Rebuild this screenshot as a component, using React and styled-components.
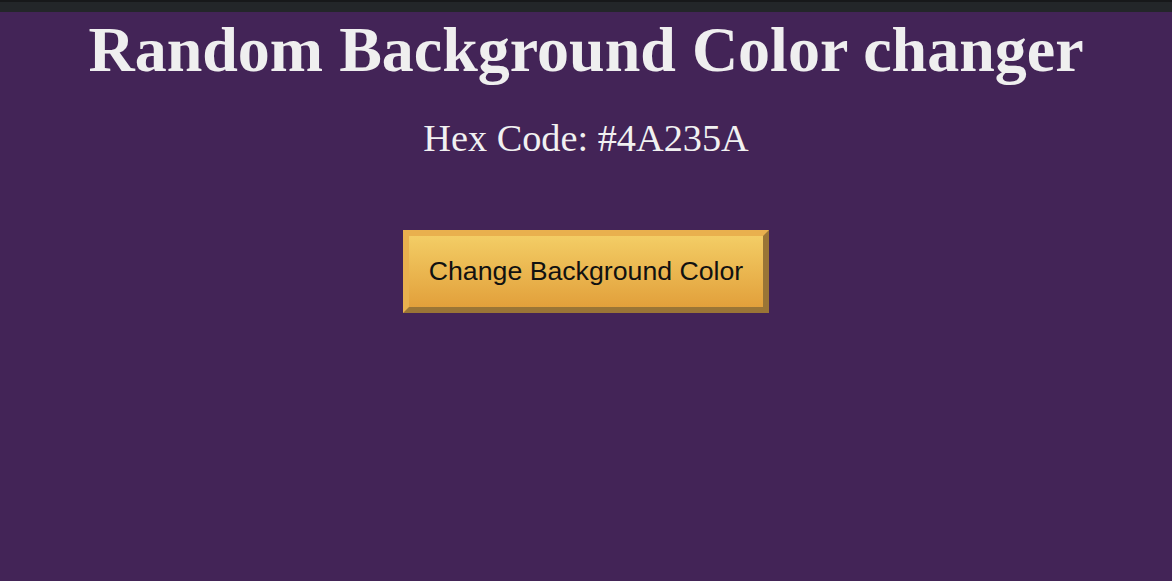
import React, { useState } from "react";
import styled, { createGlobalStyle } from "styled-components";

const GlobalStyle = createGlobalStyle`
  html, body {
    margin: 0;
    padding: 0;
  }
  body {
    background: #432457;
    font-family: "Liberation Serif", "Times New Roman", serif;
  }
`;

const TopBar = styled.div`
  height: 10px;
  background: #232629;
  border-top: 2px solid #17181a;
`;

const Page = styled.main`
  min-height: 569px;
  display: flex;
  flex-direction: column;
  align-items: center;
  background: #432457;
`;

const Title = styled.h1`
  margin: 1px 0 0;
  font-family: "Liberation Serif", "Times New Roman", serif;
  font-size: 64px;
  font-weight: 700;
  color: #efefef;
  text-align: center;
`;

const HexCode = styled.p`
  margin: 29px 0 0;
  font-family: "Liberation Serif", "Times New Roman", serif;
  font-size: 38.3px;
  color: #f1f1f1;
`;

const ChangeButton = styled.button`
  margin-top: 70px;
  padding: 20px;
  font-family: "Liberation Sans", Arial, sans-serif;
  font-size: 26.7px;
  color: #111111;
  background: linear-gradient(to bottom, #f3cd65, #e2a03b);
  border: 6px solid;
  border-color: #e9b04e #9a7536 #9a7536 #e9b04e;
  cursor: pointer;
`;

const randomHex = () =>
  "#" +
  Math.floor(Math.random() * 0xffffff)
    .toString(16)
    .padStart(6, "0")
    .toUpperCase();

export default function App() {
  const [hex, setHex] = useState("#4A235A");

  return (
    <>
      <GlobalStyle />
      <TopBar />
      <Page>
        <Title>Random Background Color changer</Title>
        <HexCode>Hex Code: {hex}</HexCode>
        <ChangeButton onClick={() => setHex(randomHex())}>
          Change Background Color
        </ChangeButton>
      </Page>
    </>
  );
}
